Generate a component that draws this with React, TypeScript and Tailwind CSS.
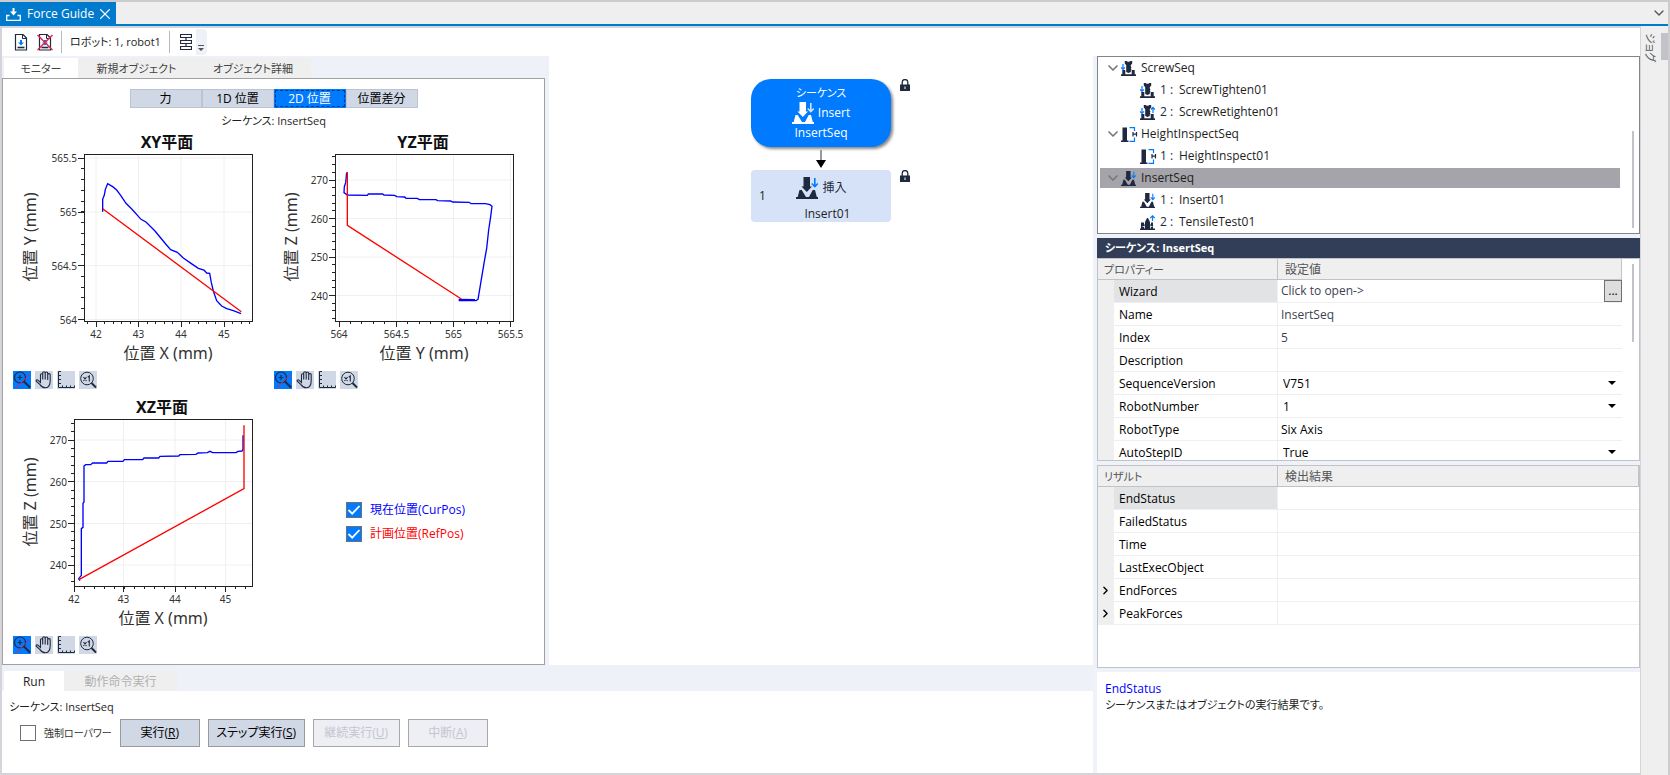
import { ReactNode, useState } from "react";
import { ChevronDown, ChevronRight, X } from "lucide-react";
import clsx from "clsx";

type Tick = { at: number; label: string };

type Plot = {
  title: string;
  xLabel: string;
  yLabel: string;
  frame: { left: number; right: number; top: number; bottom: number };
  xTicks: Tick[];
  yTicks: Tick[];
  traceBox: string;
  current: string;
  planned: string;
};

const plots: Plot[] = [
  {
    title: "XY平面",
    xLabel: "位置 X (mm)",
    yLabel: "位置 Y (mm)",
    frame: { left: 72, right: 240, top: 24, bottom: 191 },
    xTicks: [
      { at: 84, label: "42" },
      { at: 126.5, label: "43" },
      { at: 169, label: "44" },
      { at: 212, label: "45" },
    ],
    yTicks: [
      { at: 28, label: "565.5" },
      { at: 82, label: "565" },
      { at: 135.5, label: "564.5" },
      { at: 189.5, label: "564" },
    ],
    traceBox: "36 30 783 720",
    current:
      "308,275 308,238 313,225 316,208 323,191 338,200 350,210 362,226 378,250 396,268 423,298 438,306 465,333 497,372 512,389 532,397 550,414 573,430 595,445 612,450 620,459 629,460 634,488 640,513 650,542 665,558 680,566 700,572 723,581",
    planned: "308,266 640,513 724,575",
  },
  {
    title: "YZ平面",
    xLabel: "位置 Y (mm)",
    yLabel: "位置 Z (mm)",
    frame: { left: 62, right: 240, top: 24, bottom: 191 },
    xTicks: [
      { at: 66, label: "564" },
      { at: 123.5, label: "564.5" },
      { at: 180.5, label: "565" },
      { at: 237.5, label: "565.5" },
    ],
    yTicks: [
      { at: 50, label: "270" },
      { at: 88.5, label: "260" },
      { at: 127, label: "250" },
      { at: 165.5, label: "240" },
    ],
    traceBox: "39 30 783 720",
    current:
      "260,158 257,188 253,200 252,218 262,225 322,226 325,222 368,222 372,225 404,226 410,230 434,231 438,235 472,235 478,239 528,239 533,242 572,243 578,246 628,247 633,251 676,251 690,254 696,259 692,290 686,330 680,385 672,430 662,490 654,538 648,542 598,542 598,538 645,539",
    planned: "262,156 262,316 604,537",
  },
  {
    title: "XZ平面",
    xLabel: "位置 X (mm)",
    yLabel: "位置 Z (mm)",
    frame: { left: 62, right: 240, top: 24, bottom: 191 },
    xTicks: [
      { at: 62, label: "42" },
      { at: 111.5, label: "43" },
      { at: 163, label: "44" },
      { at: 213.5, label: "45" },
    ],
    yTicks: [
      { at: 45, label: "270" },
      { at: 86.5, label: "260" },
      { at: 128.5, label: "250" },
      { at: 170, label: "240" },
    ],
    traceBox: "36 15 783 720",
    current:
      "240,572 236,566 244,556 244,416 249,412 249,340 252,336 252,228 257,224 272,224 278,219 320,219 324,214 369,214 373,209 428,209 432,204 476,204 480,199 536,198 540,194 588,193 594,189 622,188 630,184 638,188 708,188 714,184 726,183 729,178 729,136",
    planned: "238,568 732,296 732,106",
  },
];

// positions of the unlabelled ticks: four between each pair, run out to the frame
function minorTicks(ticks: Tick[], from: number, to: number) {
  const step = (ticks[ticks.length - 1].at - ticks[0].at) / (ticks.length - 1) / 5;
  const result: number[] = [];
  for (let i = -10; i <= 30; i++) {
    const at = ticks[0].at + step * i;
    if (at >= Math.min(from, to) && at <= Math.max(from, to)) {
      result.push(at);
    }
  }
  return result;
}

function PlotView({ plot }: { plot: Plot }) {
  const { frame, xTicks, yTicks } = plot;
  const middle = (frame.left + frame.right) / 2;

  return (
    <div className="h-[265px]">
      <svg
        width="261"
        height="240"
        viewBox="0 0 261 240"
        className="block overflow-visible font-['Noto_Sans','Noto_Sans_CJK_JP',sans-serif] [font-feature-settings:normal]"
      >
        {xTicks.map((t) => (
          <path key={t.label} d={`M${t.at} ${frame.top}V${frame.bottom}`} stroke="#f0f0f0" />
        ))}
        {yTicks.map((t) => (
          <path key={t.label} d={`M${frame.left} ${t.at}H${frame.right}`} stroke="#f0f0f0" />
        ))}
        <g stroke="#222" shapeRendering="crispEdges">
          {xTicks.map((t) => (
            <path key={t.label} d={`M${t.at} ${frame.bottom}v6`} />
          ))}
          {yTicks.map((t) => (
            <path key={t.label} d={`M${frame.left} ${t.at}h-6`} />
          ))}
          {minorTicks(xTicks, frame.left, frame.right).map((at) => (
            <path key={at} d={`M${at} ${frame.bottom}v3`} />
          ))}
          {minorTicks(yTicks, frame.top, frame.bottom).map((at) => (
            <path key={at} d={`M${frame.left} ${at}h-3`} />
          ))}
        </g>
        <rect
          x={frame.left + 0.5}
          y={frame.top + 0.5}
          width={frame.right - frame.left}
          height={frame.bottom - frame.top}
          fill="none"
          stroke="#222"
        />
        <svg width="261" height="240" viewBox={plot.traceBox}>
          <polyline points={plot.current} fill="none" stroke="#0000ff" strokeWidth="4" />
          <polyline points={plot.planned} fill="none" stroke="#ff0000" strokeWidth="4" />
        </svg>
        <g fontSize="10" fill="#333">
          {xTicks.map((t) => (
            <text key={t.label} x={t.at} y="208" textAnchor="middle">
              {t.label}
            </text>
          ))}
          {yTicks.map((t) => (
            <text key={t.label} x={frame.left - 7} y={t.at + 4} textAnchor="end">
              {t.label}
            </text>
          ))}
        </g>
        <text x={middle - 1} y="18" fontSize="16" fontWeight="700" textAnchor="middle" fill="#111">
          {plot.title}
        </text>
        <text x={middle} y="229" fontSize="16" textAnchor="middle" fill="#333">
          {plot.xLabel}
        </text>
        <text
          fontSize="16"
          textAnchor="middle"
          fill="#333"
          transform="translate(24 107) rotate(-90)"
        >
          {plot.yLabel}
        </text>
      </svg>
      <div className="flex gap-1 pt-px pl-px">
        <button aria-label="zoom" className="size-[18px] bg-[#007bff]">
          <svg width="18" height="18" viewBox="0 0 18 18" fill="none" stroke="#1f2a40">
            <circle cx="7" cy="6.500" r="5.500" strokeWidth="1.200" />
            <path d="M7 4v5M4.500 6.500h5" strokeWidth="1.200" />
            <path d="M11 10.500l6 6" strokeWidth="2" />
            <path d="M3 17L16.500 3.500" stroke="#e0244e" />
          </svg>
        </button>
        <button aria-label="pan" className="size-[18px] bg-[#d0d7e5]">
          <svg width="18" height="18" viewBox="0 0 18 18" fill="none" stroke="#1f2a40" strokeWidth="1.100">
            <path d="M5.500 11.500V3.800a1 1 0 0 1 2.200 0V8.500V2a1.100 1.100 0 0 1 2.500 0V8.500V2.200a1.100 1.100 0 0 1 2.500 0V9V3.800a1.100 1.100 0 0 1 2.500 0.200V9.500c0 4-1 7-4.500 7.300-3.200 0.200-4.500-1.300-5.700-3.200L1.200 10.200c-.4-1 .8-1.800 1.700-1.100z" />
          </svg>
        </button>
        <button aria-label="axis" className="size-[18px] bg-[#d0d7e5]">
          <svg width="18" height="18" viewBox="0 0 18 18" fill="none" stroke="#1f2a40">
            <path d="M1.500 0.500V16.500H17.500M1.500 0.500h2.500M1.500 4.500h2.500M1.500 8.500h2.500M1.500 12.500h2.500M5.500 16.500v-2M9.500 16.500v-2M13.500 16.500v-2M17.500 16.500v-2" />
          </svg>
        </button>
        <button aria-label="actual size" className="size-[18px] bg-[#d0d7e5]">
          <svg width="18" height="18" viewBox="0 0 18 18" fill="none" stroke="#1f2a40">
            <circle cx="8" cy="7.500" r="6.300" />
            <path d="M12.500 12l4.500 4.500" strokeWidth="2" />
            <path d="M4.500 6l3 4M7.500 6l-3 4M8.800 6.200l1.500-1.200v5.500" strokeWidth="1.100" />
          </svg>
        </button>
      </div>
    </div>
  );
}

function InsertIcon({ size, arrow = "#007bff" }: { size: number; arrow?: string }) {
  return (
    <svg width={size} height={size} viewBox="0 0 22 22" fill="currentColor">
      <path d="M7.500 0h6.500v9.500h2l-5.200 5.500-5.300-5.500h2z" />
      <path d="M0 20h1.700l1.800-7h2.200L10 20v2H0zM22 20h-1.200l-1.800-7h-2.300L13 20H10v2h12z" />
      <path d="M18.800 1v8.500M15.800 6.500l3 3.200 3-3.200" fill="none" stroke={arrow} strokeWidth="1.600" />
    </svg>
  );
}

function ScrewIcon({ retighten = false }: { retighten?: boolean }) {
  return (
    <svg width="15" height="15" viewBox="0 0 15 15" fill="currentColor">
      <path d="M3.800 0h2l0.800 0.800h1.800L9.200 0h2v2.800L9.800 4v1.500l0.700 1-0.700 1 0.700 1-0.700 1v1.500L7.500 12 5.200 11V4L3.800 2.800z" />
      <path d="M0 13.300h1.300V9h3v4.300h6.400V9h3v4.300H15V15H0z" />
      <path d="M2 3v5.500M0 6.300l2 2.100 2-2.100" fill="none" stroke="#007bff" strokeWidth="1.200" />
      {retighten && (
        <path d="M13 8V2.500M11 4.500l2-2.100 2 2.100" fill="none" stroke="#007bff" strokeWidth="1.200" />
      )}
    </svg>
  );
}

function HeightIcon() {
  return (
    <svg width="17" height="15" viewBox="0 0 17 15" fill="currentColor">
      <path d="M1.500 0.500H6V13.500h1.500V15H0v-1.500h1.500z" />
      <path d="M8.500 0.600h5V4M13.500 10.500v3.900h-5" fill="none" stroke="#007bff" strokeWidth="1.200" />
      <path d="M12 5v4.500M15.500 5v4.500M12 7.200h3.500" fill="none" stroke="#1f2a40" strokeWidth="1.200" />
    </svg>
  );
}

function TensileIcon() {
  return (
    <svg width="15" height="15" viewBox="0 0 15 15" fill="currentColor">
      <path d="M0 13.500h1V7.500h3v2h1V7l2-4h1l2 4v2.500h1v-2h2v6h2V15H0z" />
      <path d="M4.500 10.500v3M10.500 10.500v3M2.500 11.500h2M10.500 11.500h2" stroke="#fff" strokeWidth="0.800" />
      <path d="M12.500 6V1M10.200 3.200l2.300-2.400 2.300 2.400" fill="none" stroke="#007bff" strokeWidth="1.200" />
    </svg>
  );
}

function LockIcon() {
  return (
    <svg width="10" height="12" viewBox="0 0 10 12" className="absolute top-0 left-full ml-[9px]">
      <path d="M2.200 6V3.300a2.800 2.800 0 0 1 5.600 0V6" fill="none" stroke="#1f2a40" strokeWidth="1.300" />
      <path d="M0 5.500h10V12H0z" fill="#1f2a40" />
      <path d="M4.500 7.500h1V10h-1z" fill="#fff" />
    </svg>
  );
}

function DocumentIcon({ removed = false }: { removed?: boolean }) {
  return (
    <svg width="16" height="17" viewBox="0 0 16 17" fill="none" stroke="#1f2a40">
      <path d="M2.500 0.500h7.500l3.500 3.500V16H2.500z" strokeWidth="1.200" />
      <path d="M9.500 0.500V4.500h4" />
      <path d="M4.500 13.500h7" strokeWidth="1.600" />
      <path d="M8 6v3" stroke="#007bff" strokeWidth="2" />
      <path d="M5 8.500h6l-3 3z" fill="#007bff" stroke="none" />
      {removed && <path d="M0.500 1L15.500 16M15.500 1L0.500 16" stroke="#e0244e" strokeWidth="1.500" />}
    </svg>
  );
}

type CheckProps = { label: string; className: string; checked: boolean; onChange: () => void };

function Check({ label, className, checked, onChange }: CheckProps) {
  return (
    <label className={clsx("flex items-center gap-2", className)}>
      <span className="relative block size-4">
        <input
          type="checkbox"
          checked={checked}
          onChange={onChange}
          className="block size-4 appearance-none border border-[#707070] bg-white checked:bg-[#007bff]"
        />
        {checked && (
          <svg viewBox="0 0 16 16" className="pointer-events-none absolute inset-0">
            <path d="M2.500 8l3.700 3.700L13.500 4" fill="none" stroke="#fff" strokeWidth="1.800" />
          </svg>
        )}
      </span>
      {label}
    </label>
  );
}

const tree: { name: string; step?: string; icon: ReactNode; selected?: boolean }[] = [
  { name: "ScrewSeq", icon: <ScrewIcon /> },
  { name: "ScrewTighten01", step: "1 :", icon: <ScrewIcon /> },
  { name: "ScrewRetighten01", step: "2 :", icon: <ScrewIcon retighten /> },
  { name: "HeightInspectSeq", icon: <HeightIcon /> },
  { name: "HeightInspect01", step: "1 :", icon: <HeightIcon /> },
  { name: "InsertSeq", icon: <InsertIcon size={15} />, selected: true },
  { name: "Insert01", step: "1 :", icon: <InsertIcon size={15} /> },
  { name: "TensileTest01", step: "2 :", icon: <TensileIcon /> },
];

const properties = [
  { name: "Wizard", value: "Click to open->", kind: "wizard" },
  { name: "Name", value: "InsertSeq", kind: "input" },
  { name: "Index", value: "5", kind: "text" },
  { name: "Description", value: "", kind: "input" },
  { name: "SequenceVersion", value: "V751", kind: "select" },
  { name: "RobotNumber", value: "1", kind: "select" },
  { name: "RobotType", value: "Six Axis", kind: "plain" },
  { name: "AutoStepID", value: "True", kind: "select" },
];

const results = [
  { name: "EndStatus" },
  { name: "FailedStatus" },
  { name: "Time" },
  { name: "LastExecObject" },
  { name: "EndForces", expandable: true },
  { name: "PeakForces", expandable: true },
];

const modes = ["力", "1D 位置", "2D 位置", "位置差分"];

function PropertyValue({ name, value, kind }: { name: string; value: string; kind: string }) {
  if (kind === "wizard") {
    return (
      <div className="flex h-[22px] items-center justify-between">
        {value}
        <button className="flex h-[22px] w-[18px] items-center justify-center border border-[#707070] bg-[#ddd] text-black">
          ...
        </button>
      </div>
    );
  }
  if (kind === "input") {
    return <input aria-label={name} defaultValue={value} className="block h-[22px] w-full outline-none" />;
  }
  if (kind === "select") {
    return (
      <div className="relative">
        <select
          aria-label={name}
          className="block h-[22px] w-full appearance-none pt-0.5 pl-0.5 text-black outline-none"
        >
          <option>{value}</option>
        </select>
        <svg width="8" height="4" viewBox="0 0 8 4" className="pointer-events-none absolute top-[9px] right-1.5">
          <path d="M0 0h8L4 4z" />
        </svg>
      </div>
    );
  }
  return <span className={clsx("block pt-0.5", kind === "plain" && "text-black")}>{value}</span>;
}

export default function App() {
  const [mode, setMode] = useState("2D 位置");
  const [showCurrent, setShowCurrent] = useState(true);
  const [showPlanned, setShowPlanned] = useState(true);
  const [lowPower, setLowPower] = useState(false);

  return (
    <div className="flex h-screen flex-col overflow-hidden border-t-2 border-r-2 border-[#ccc] bg-[#efefef] font-['Open_Sans','Noto_Sans_CJK_JP',sans-serif] text-[12px] leading-4 text-[#1e1e1e] [font-feature-settings:'palt']">
      <header className="flex h-6 shrink-0 items-stretch justify-between border-b-2 border-[#007acc]">
        <div className="flex w-[116px] items-center gap-1.5 bg-[#007acc] pt-0.5 pl-1.5 text-white">
          <svg width="15" height="13" viewBox="0 0 15 13" fill="none" stroke="#fff">
            <path d="M7.500 0v4" strokeWidth="2" />
            <path d="M4 3.500h7L7.500 7.500z" fill="#fff" stroke="none" />
            <path d="M3.500 7.500H0.700v4.800h13.600V7.500H11.500" strokeWidth="1.300" />
          </svg>
          Force Guide
          <button aria-label="close" className="-ml-1">
            <X size={18} strokeWidth={1.5} />
          </button>
        </div>
        <button aria-label="tabs" className="pr-px text-[#555]">
          <ChevronDown size={16} />
        </button>
      </header>

      <div className="flex min-h-0 flex-1">
        <div className="flex min-w-0 flex-1 flex-col border-t-2 border-b-2 border-l-2 border-[#d4d4da] bg-white">
          <div className="flex h-7 shrink-0 items-center pl-[11px]">
            <button aria-label="add object">
              <DocumentIcon />
            </button>
            <button aria-label="remove object" className="ml-2">
              <DocumentIcon removed />
            </button>
            <span className="mx-2 h-[22px] w-px bg-[#b8bac2]" />
            <span className="text-[11px]">ロボット: 1, robot1</span>
            <span className="ml-2 h-[22px] w-px bg-[#b8bac2]" />
            <button aria-label="flow" className="ml-2.5">
              <svg width="12" height="17" viewBox="0 0 12 17" fill="none" stroke="#1f2a40">
                <path d="M0.500 0.500h11v3h-11zM0.500 6.500h11v3h-11zM0.500 12.500h11v3h-11zM6 3.500v3M6 9.500v3" strokeWidth="1.200" />
              </svg>
            </button>
            <button aria-label="more" className="ml-1 flex h-[26px] w-[11px] items-end justify-center rounded-r bg-[#eef2f8] pb-1">
              <svg width="6" height="6" viewBox="0 0 6 6">
                <path d="M0 0h6v1H0zM0 3h6L3 6z" fill="#555" />
              </svg>
            </button>
          </div>

          <div className="flex min-h-0 flex-1">
            <div className="flex min-w-0 flex-1 flex-col bg-[#eef1f7]">
              <div className="flex min-h-0 flex-1">
                <section className="mr-1 flex w-[543px] shrink-0 flex-col">
                  <nav className="flex h-[22px] shrink-0 pt-0.5 pl-0.5 text-[11px] text-[#444]">
                    <button className="w-[74px] bg-white pt-0.5">モニター</button>
                    <button className="w-[117px] bg-[#efefef] pt-0.5">新規オブジェクト</button>
                    <button className="w-[116px] bg-[#efefef] pt-0.5">オブジェクト詳細</button>
                  </nav>
                  <div className="flex min-h-0 flex-1 flex-col overflow-hidden border border-[#a0a0a0] bg-white pt-2.5">
                    <div className="mx-auto grid h-[18px] w-72 shrink-0 grid-cols-4">
                      {modes.map((m) => (
                        <button
                          key={m}
                          onClick={() => setMode(m)}
                          className={clsx(
                            "border",
                            m === mode
                              ? "border-[#007bff] bg-[#007bff] text-white outline-1 -outline-offset-2 outline-dashed outline-[#003a80]"
                              : "border-[#bcc3d2] bg-[#d0d7e5] text-black"
                          )}
                        >
                          <span className="block leading-[17px]">{m}</span>
                        </button>
                      ))}
                    </div>
                    <p className="mt-1.5 shrink-0 text-center text-[11px]">シーケンス: InsertSeq</p>
                    <div className="mt-px grid grid-cols-[261px_261px] pl-[9px]">
                      {plots.map((plot) => (
                        <PlotView key={plot.title} plot={plot} />
                      ))}
                      <div className="flex flex-col gap-2 pt-[107px] pl-[73px]">
                        <Check
                          label="現在位置(CurPos)"
                          className="text-[#0000ff]"
                          checked={showCurrent}
                          onChange={() => setShowCurrent(!showCurrent)}
                        />
                        <Check
                          label="計画位置(RefPos)"
                          className="text-[#ff0000]"
                          checked={showPlanned}
                          onChange={() => setShowPlanned(!showPlanned)}
                        />
                      </div>
                    </div>
                  </div>
                </section>

                <section className="flex min-w-0 flex-1 flex-col items-center bg-white pt-[23px]">
                  <div className="relative flex h-[68px] w-[140px] flex-col items-center justify-center rounded-[20px] bg-[#007bff] text-white shadow-[2px_2px_3px_#888]">
                    <LockIcon />
                    <span className="text-[11px]">シーケンス</span>
                    <span className="flex h-6 items-center gap-1">
                      <InsertIcon size={22} arrow="#cfe4ff" />
                      Insert
                    </span>
                    <span>InsertSeq</span>
                  </div>
                  <svg width="10" height="18" viewBox="0 0 10 18" className="mt-[3px] mb-0.5">
                    <path d="M5 0v11" stroke="#333" />
                    <path d="M0 10h10L5 18z" />
                  </svg>
                  <div className="relative flex h-[52px] w-[140px] items-center rounded bg-[#d6e2f8] px-2">
                    <LockIcon />
                    <span>1</span>
                    <div className="flex flex-1 flex-col items-center pr-1.5">
                      <span className="flex h-9 items-center gap-1 text-[#1f2a40]">
                        <InsertIcon size={22} />
                        挿入
                      </span>
                      <span className="pl-3">Insert01</span>
                    </div>
                  </div>
                </section>
              </div>

              <section className="flex h-[108px] shrink-0 flex-col">
                <nav className="flex h-[26px] pt-1.5 pl-0.5">
                  <button className="w-[60px] bg-white pt-0.5">Run</button>
                  <button className="w-[113px] bg-[#efefef] pt-0.5 text-[#b0b0b0]">動作命令実行</button>
                </nav>
                <div className="flex-1 bg-white pt-2">
                  <p className="pl-[7px] text-[11px]">シーケンス: InsertSeq</p>
                  <div className="mt-1 flex items-center gap-2 pl-[18px]">
                    <Check
                      label="強制ローパワー"
                      className="text-[10px] text-[#333]"
                      checked={lowPower}
                      onChange={() => setLowPower(!lowPower)}
                    />
                    <button className="h-7 w-20 border border-[#9a9a9a] bg-[#d0d7e5] text-black">
                      実行(<u>R</u>)
                    </button>
                    <button className="h-7 w-[97px] border border-[#9a9a9a] bg-[#d0d7e5] text-black">
                      ステップ実行(<u>S</u>)
                    </button>
                    <button disabled className="h-7 w-[87px] border border-[#a8a8a8] bg-[#eeeff5] text-[#c4c6ce]">
                      継続実行(<u>U</u>)
                    </button>
                    <button disabled className="h-7 w-20 border border-[#a8a8a8] bg-[#eeeff5] text-[#c4c6ce]">
                      中断(<u>A</u>)
                    </button>
                  </div>
                </div>
              </section>
            </div>

            <aside className="flex w-[547px] shrink-0 flex-col gap-1 bg-[#eff2f8] pl-1">
              <div className="flex h-[178px] shrink-0 overflow-hidden border border-[#83838b] bg-white pl-0.5">
                <ul className="flex-1">
                  {tree.map((item) => (
                    <li key={item.name} className="flex h-[22px] items-center">
                      <div
                        className={clsx(
                          "flex h-5 w-full items-center text-[#1f2a40]",
                          item.step ? "pl-10" : "pl-[5px]",
                          item.selected && "bg-[#a5a4aa]"
                        )}
                      >
                        {!item.step && <ChevronDown size={16} strokeWidth={2.5} className="text-[#777]" />}
                        <span className="w-5">{item.icon}</span>
                        {item.step && <span className="w-[19px]">{item.step}</span>}
                        <span className="text-[#1e1e1e]">{item.name}</span>
                      </div>
                    </li>
                  ))}
                </ul>
                <span className="mt-[74px] mr-[5px] ml-3 h-[97px] w-0.5 bg-[#c2c3c9]" />
              </div>

              <div className="flex h-[223px] shrink-0 flex-col">
                <h2 className="h-5 shrink-0 bg-[#323e58] pl-2 text-[11px] leading-5 font-bold text-white">
                  シーケンス: InsertSeq
                </h2>
                <div className="flex min-h-0 flex-1 overflow-hidden border border-[#c2c3c9] bg-white">
                  <table className="h-fit flex-1 table-fixed border-separate border-spacing-0">
                    <colgroup>
                      <col className="w-4" />
                      <col className="w-[164px]" />
                      <col />
                    </colgroup>
                    <thead>
                      <tr className="h-[21px] bg-[#efefef] text-left text-[#555]">
                        <th colSpan={2} className="border-r border-b border-[#c2c3c9] pt-0.5 pl-1.5 text-[11px] font-normal">
                          プロパティー
                        </th>
                        <th className="border-r border-b border-[#c2c3c9] pt-0.5 pl-[7px] font-normal">設定値</th>
                      </tr>
                    </thead>
                    <tbody>
                      {properties.map((p, i) => (
                        <tr key={p.name} className="h-[23px]">
                          <td className="bg-[#efefef]" />
                          <td
                            className={clsx(
                              "border-r border-b border-[#efefef] pt-0.5 pl-[5px] text-black",
                              i === 0 && "bg-[#e2e3e5]"
                            )}
                          >
                            {p.name}
                          </td>
                          <td className="border-b border-[#efefef] pl-[3px] text-[#3c4254]">
                            <PropertyValue name={p.name} value={p.value} kind={p.kind} />
                          </td>
                        </tr>
                      ))}
                    </tbody>
                  </table>
                  <span className="mt-[5px] mr-[5px] ml-2.5 h-[78px] w-0.5 bg-[#c2c3c9]" />
                </div>
              </div>

              <div className="h-[203px] shrink-0 border border-[#c2c3c9] bg-white">
                <table className="w-full table-fixed border-separate border-spacing-0">
                  <colgroup>
                    <col className="w-4" />
                    <col className="w-[164px]" />
                    <col />
                  </colgroup>
                  <thead>
                    <tr className="h-[21px] bg-[#efefef] text-left text-[#555]">
                      <th colSpan={2} className="border-r border-b border-[#c2c3c9] pt-0.5 pl-1.5 text-[11px] font-normal">
                        リザルト
                      </th>
                      <th className="border-r border-b border-[#c2c3c9] pt-0.5 pl-[7px] font-normal">検出結果</th>
                    </tr>
                  </thead>
                  <tbody>
                    {results.map((r, i) => (
                      <tr key={r.name} className="h-[23px] text-black">
                        <td className="bg-[#efefef] pl-px">
                          {r.expandable && <ChevronRight size={13} strokeWidth={2.5} />}
                        </td>
                        <td
                          className={clsx(
                            "border-r border-b border-[#efefef] pt-0.5 pl-[5px]",
                            i === 0 && "bg-[#e2e3e5]"
                          )}
                        >
                          {r.name}
                        </td>
                        <td className="border-b border-[#efefef]" />
                      </tr>
                    ))}
                  </tbody>
                </table>
              </div>

              <div className="flex-1 bg-white pt-[9px] pl-2">
                <p className="text-[#0000ff]">EndStatus</p>
                <p className="text-[11px]">シーケンスまたはオブジェクトの実行結果です。</p>
              </div>
            </aside>
          </div>
        </div>

        <div className="flex w-7 shrink-0 items-start justify-between border-l border-[#d4d4da] pt-[7px]">
          <button className="pl-px text-[11px] text-[#555] [text-orientation:sideways] [writing-mode:vertical-rl]">
            ジョグ
          </button>
          <span className="h-[27px] w-[7px] bg-[#c2c3c9]" />
        </div>
      </div>
    </div>
  );
}
